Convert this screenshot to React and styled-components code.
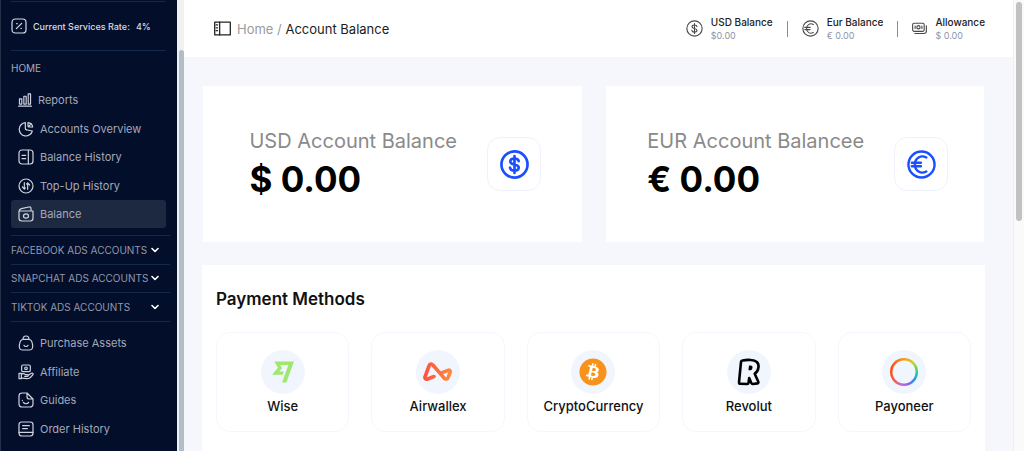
import React from "react";
import styled, { createGlobalStyle } from "styled-components";
import { FaBitcoin } from "react-icons/fa";

const Icon = ({ size = 16, box = 24, stroke = 1.8, children }) => (
  <svg
    width={size}
    height={size}
    viewBox={`0 0 ${box} ${box}`}
    fill="none"
    stroke="currentColor"
    strokeWidth={stroke}
    strokeLinecap="round"
    strokeLinejoin="round"
    aria-hidden="true"
  >
    {children}
  </svg>
);

const RateIcon = () => (
  <Icon>
    <rect x="1.5" y="1.5" width="21" height="21" rx="5" />
    <path d="M8 16l8-8M8.5 8.5h.8M14.8 15.5h.8" />
  </Icon>
);

const ReportsIcon = () => (
  <Icon size={14} stroke={2}>
    <path d="M1 22.500h22M2.500 19V10h4v9zM10 19V5.500h4V19zM17.500 19V1.500h4V19z" />
  </Icon>
);

const PieIcon = () => (
  <Icon>
    <path d="M11 2.500a10 10 0 1 0 10.500 12.500l-7.500-1.500c-2 0-3-1-3-3z" />
    <path d="M15 2.500v5c0 1 .5 1.500 1.500 1.500h5.500M15 2.500c3.500.5 6.500 3 7 6.500M16.500 7.500l3.500-3.500" />
  </Icon>
);

const LedgerIcon = () => (
  <Icon>
    <rect x="1.500" y="1.500" width="21" height="21" rx="4.500" />
    <path d="M15.500 2v20M6 9.500h5.500M6 14.500h5.500" />
  </Icon>
);

const TopUpIcon = () => (
  <Icon>
    <circle cx="12" cy="12" r="10.500" />
    <path d="M9.500 7v9.500l-3-3M14.500 17V7.500l3 3M9.500 16.500l1.500-1.500M14.500 7.500L13 9" />
  </Icon>
);

const WalletIcon = () => (
  <Icon>
    <path d="M1.500 7.500v11a4 4 0 0 0 4 4h13a4 4 0 0 0 4-4v-11zM1.500 7.500C2 5 3 4.500 5 4l11.500-2.500c2-.4 3 .5 3 2.500v3.500" />
    <ellipse cx="12" cy="15" rx="3.800" ry="3.200" />
  </Icon>
);

const BagIcon = () => (
  <Icon>
    <path d="M7.500 6.500C7.500 3.500 9 1.500 12 1.500s4.500 2 4.500 5M8 6.500h8c4 0 5.500 4 6 9 .4 4.500-1 7-4.500 7h-11c-3.500 0-5-2.500-4.500-7 .5-5 2-9 6-9z" />
    <path d="M9 15.500c1.500 2.300 4.500 2.300 6 0" />
  </Icon>
);

const AffiliateIcon = () => (
  <Icon>
    <rect x="5.500" y="1.500" width="13" height="10" rx="2" />
    <circle cx="12" cy="6.500" r="2" />
    <path d="M1.500 14h3.500v8H1.500zM5 15.500c2-1.500 4-1.500 6 .5h3c2 0 2 2.500 0 2.500H10M15.500 17l4.500-3c2-1 3.500.8 2 2.500-4 4.500-5 5.500-9 5.500-3 0-5-.5-8-1" />
  </Icon>
);

const GuideIcon = () => (
  <Icon>
    <path d="M13.500 1.500H6.500c-3.500 0-5 1.500-5 5v11c0 3.500 1.500 5 5 5h11c3.500 0 5-1.500 5-5v-7zM13.500 1.500V7c0 2.500 1 3.500 3.500 3.500h5.500" />
    <path d="M8 15.500c2 2.800 6 2.800 8 0M6.500 12.500v.3" />
  </Icon>
);

const OrderIcon = () => (
  <Icon>
    <rect x="1.500" y="1.500" width="21" height="21" rx="4" />
    <path d="M1.500 17h21M7 7h10M7 11.500h7" />
  </Icon>
);

const PanelIcon = () => (
  <Icon size={17} stroke={1.8}>
    <rect x="1" y="3" width="22" height="18" />
    <path d="M8 3v18M3 7h2M3 11h2M3 15h2" />
  </Icon>
);

const DollarIcon = ({ size, stroke }) => (
  <Icon size={size} stroke={stroke}>
    <circle cx="12" cy="12" r="10.800" />
    <path d="M15.500 9.300C15.300 7.800 14 7 12 7c-2.200 0-3.500 1-3.500 2.500 0 3.500 7 1.500 7 5 0 1.600-1.400 2.600-3.500 2.600s-3.500-1-3.700-2.500M12 5v14" />
  </Icon>
);

const EuroIcon = ({ size, stroke }) => (
  <Icon size={size} stroke={stroke}>
    <circle cx="12" cy="12" r="10.800" />
    <path d="M16 6.200c-4.500-2.500-9.500.5-9.500 5.800s5 8.300 9.500 5.800M4 10.500h7.500M4 13.500h7.500" />
  </Icon>
);

const CashIcon = () => (
  <Icon size={15} stroke={1.8}>
    <rect x="1" y="3.500" width="18.500" height="13" rx="2.500" />
    <circle cx="10.300" cy="10" r="2.600" />
    <path d="M5 8v4M15.800 8v4M4.500 20H19c2.500 0 4-1.500 4-4V7.500" />
  </Icon>
);

const WiseLogo = () => (
  <svg width="22" height="22" viewBox="0 0 24 24" fill="#9fe870" aria-hidden="true">
    <path d="M6.488 7.469 0 15.050h11.585l1.301-3.576H7.922l3.033-3.507.01-.092L8.993 4.480h8.873l-6.878 18.925h4.706L24 .595H2.543z" />
  </svg>
);

const AirwallexLogo = () => (
  <svg width="30" height="20" viewBox="0 0 30 20" fill="none" aria-hidden="true">
    <defs>
      <linearGradient id="airwallex" x1="0" y1="0" x2="30" y2="0" gradientUnits="userSpaceOnUse">
        <stop offset="0" stopColor="#ff4f42" />
        <stop offset="1" stopColor="#ff8e3c" />
      </linearGradient>
    </defs>
    <path
      d="M11 14.500L4.500 17c-1.800.6-3-.6-2.500-2.200L6.200 3.500C6.900 1.700 8.700 1.500 9.900 3l11.300 13.200c1.200 1.300 3.300 1 3.900-.6l2-5.100c.6-1.700-.6-2.800-2.100-2.200l-7.200 2.900"
      stroke="url(#airwallex)"
      strokeWidth="3.600"
      strokeLinecap="round"
      strokeLinejoin="round"
    />
  </svg>
);

const RevolutLogo = () => (
  <svg width="24" height="28" viewBox="0 0 24 28" aria-hidden="true">
    <path
      d="M5.500 2.500C8 2 11 1.800 14 2c5 .2 8 2.700 7.500 7.200-.3 3.300-1.600 5.300-3.800 6.500l3.600 8c.3.900-.1 1.500-.9 1.700l-4.500.6c-.8.1-1.300-.3-1.600-1L12.200 20l-.7 4.800c-.1.800-.6 1.200-1.400 1.200l-6.900-.2c-.9 0-1.300-.6-1.200-1.400L4 4c.1-1 .6-1.400 1.500-1.500z"
      fill="#f1f5fe"
      stroke="#000"
      strokeWidth="2.600"
      strokeLinejoin="round"
    />
    <path d="M12 7.500h1.500c1.500 0 2.200.8 2 2.200-.2 1.700-1.200 2.600-2.700 2.600h-1.400z" fill="#000" />
  </svg>
);

const accountLinks = [
  { label: "Reports", icon: <ReportsIcon /> },
  { label: "Accounts Overview", icon: <PieIcon /> },
  { label: "Balance History", icon: <LedgerIcon /> },
  { label: "Top-Up History", icon: <TopUpIcon /> },
  { label: "Balance", icon: <WalletIcon />, active: true },
];

const adGroups = ["FACEBOOK ADS ACCOUNTS", "SNAPCHAT ADS ACCOUNTS", "TIKTOK ADS ACCOUNTS"];

const otherLinks = [
  { label: "Purchase Assets", icon: <BagIcon /> },
  { label: "Affiliate", icon: <AffiliateIcon /> },
  { label: "Guides", icon: <GuideIcon /> },
  { label: "Order History", icon: <OrderIcon /> },
];

const summary = [
  { label: "USD Balance", value: "$0.00", icon: <DollarIcon size={17} stroke={1.6} /> },
  { label: "Eur Balance", value: "€ 0.00", icon: <EuroIcon size={17} stroke={1.6} /> },
  { label: "Allowance", value: "$ 0.00", icon: <CashIcon /> },
];

const balances = [
  { label: "USD Account Balance", value: "$ 0.00", icon: <DollarIcon size={29} stroke={2.2} /> },
  { label: "EUR Account Balancee", value: "€ 0.00", icon: <EuroIcon size={29} stroke={2} /> },
];

const NavLinks = ({ links, height }) => (
  <NavList $height={height}>
    {links.map(({ label, icon, active }) => (
      <li key={label}>
        <NavLink href="#" $active={active} aria-current={active ? "page" : undefined}>
          {icon}
          {label}
        </NavLink>
      </li>
    ))}
  </NavList>
);

const App = () => {
  const methods = [
    { label: "Wise", logo: <WiseLogo /> },
    { label: "Airwallex", logo: <AirwallexLogo /> },
    {
      label: "CryptoCurrency",
      logo: (
        <Coin>
          <FaBitcoin size={28} />
        </Coin>
      ),
    },
    { label: "Revolut", logo: <RevolutLogo /> },
    { label: "Payoneer", logo: <Ring /> },
  ];

  return (
    <>
      <GlobalStyle />
      <Page>
        <Sidebar>
          <Rate>
            <RateIcon />
            <span>Current Services Rate:</span>
            <span>4%</span>
          </Rate>
          <NavTitle>HOME</NavTitle>
          <NavLinks links={accountLinks} height={142} />
          <Groups>
            {adGroups.map((name) => (
              <GroupButton key={name} type="button">
                {name}
                <Icon size={8} box={8} stroke={1.6}>
                  <path d="M1 2.500l3 3 3-3" />
                </Icon>
              </GroupButton>
            ))}
          </Groups>
          <NavLinks links={otherLinks} height={114} />
        </Sidebar>
        <SideTrack>
          <SideThumb />
        </SideTrack>
        <Content>
          <Header>
            <Crumbs aria-label="Breadcrumb">
              <MenuButton type="button" aria-label="Toggle menu">
                <PanelIcon />
              </MenuButton>
              <span>
                <a href="#">Home</a> / <strong>Account Balance</strong>
              </span>
            </Crumbs>
            <Summary>
              {summary.map(({ label, value, icon }) => (
                <SummaryItem key={label}>
                  {icon}
                  <div>
                    <SummaryLabel>{label}</SummaryLabel>
                    <SummaryValue>{value}</SummaryValue>
                  </div>
                </SummaryItem>
              ))}
            </Summary>
          </Header>
          <Main>
            <BalanceGrid>
              {balances.map(({ label, value, icon }) => (
                <BalanceCard key={label}>
                  <div>
                    <BalanceLabel>{label}</BalanceLabel>
                    <BalanceValue>{value}</BalanceValue>
                  </div>
                  <IconBox>{icon}</IconBox>
                </BalanceCard>
              ))}
            </BalanceGrid>
            <Panel>
              <PanelTitle>Payment Methods</PanelTitle>
              <MethodGrid>
                {methods.map(({ label, logo }) => (
                  <Method key={label} type="button">
                    <LogoCircle>{logo}</LogoCircle>
                    {label}
                  </Method>
                ))}
              </MethodGrid>
            </Panel>
          </Main>
        </Content>
        <PageTrack>
          <PageThumb />
        </PageTrack>
      </Page>
    </>
  );
};

const GlobalStyle = createGlobalStyle`
  * {
    box-sizing: border-box;
  }
  body {
    margin: 0;
    font-family: Inter, "Liberation Sans", sans-serif;
    background: #f6f7fd;
  }
  button {
    font-family: inherit;
    cursor: pointer;
  }
  svg {
    flex-shrink: 0;
    display: block;
  }
`;
const Page = styled.div`
  display: flex;
  height: 100vh;
  overflow: hidden;
`;
const Sidebar = styled.aside`
  flex: 0 0 177px;
  padding: 1px 11px 0 10px;
  overflow: hidden;
  background: #030e2b;
  border-left: 1px solid #263149;
  color: #a3a9b8;
`;
const Rate = styled.div`
  display: flex;
  align-items: center;
  gap: 6px;
  height: 50px;
  border: solid #14284a;
  border-width: 1px 0;
  font-size: 9px;
  font-weight: 500;
  color: #d7dbe4;
`;
const NavTitle = styled.h2`
  margin: 10px 0;
  font-size: 10px;
  font-weight: 400;
  line-height: 15px;
`;
const NavList = styled.ul`
  display: grid;
  align-content: space-between;
  min-height: ${({ $height }) => $height}px;
  margin: 0;
  padding: 0;
  list-style: none;
`;
const NavLink = styled.a`
  display: flex;
  align-items: center;
  gap: 6px;
  height: 28px;
  padding-left: 7px;
  border-radius: 3px;
  font-size: 11px;
  color: inherit;
  text-decoration: none;
  background: ${({ $active }) => ($active ? "#1d2841" : "transparent")};
  svg {
    color: #cfd4df;
  }
`;
const Groups = styled.div`
  display: grid;
  grid-auto-rows: 1fr;
  min-height: 87px;
  margin: 7px -4px 7px 0;
  border-top: 1px solid #14284a;
`;
const GroupButton = styled.button`
  display: flex;
  align-items: center;
  justify-content: space-between;
  padding: 0 11px 0 0;
  border: 0;
  border-bottom: 1px solid #14284a;
  background: none;
  font-size: 10px;
  color: #9299aa;
  white-space: nowrap;
  svg {
    color: #fff;
  }
`;
const SideTrack = styled.div`
  flex: 0 0 7px;
  display: flex;
  padding: 50px 0 0 2px;
  background: #f1f1f1;
`;
const SideThumb = styled.div`
  flex: 1;
  border-radius: 3px 3px 0 0;
  background: #b0bec5;
`;
const Content = styled.div`
  flex: 1;
  min-width: 0;
`;
const Header = styled.header`
  display: flex;
  align-items: center;
  justify-content: space-between;
  height: 57px;
  padding: 0 28px 0 30px;
  background: #fff;
`;
const Crumbs = styled.nav`
  display: flex;
  align-items: center;
  gap: 6px;
  font-size: 13px;
  color: #9b9b9b;
  a {
    color: inherit;
    text-decoration: none;
  }
  strong {
    font-weight: 400;
    color: #1c1c1c;
  }
`;
const MenuButton = styled.button`
  padding: 0;
  border: 0;
  background: none;
  color: #222;
`;
const Summary = styled.div`
  display: flex;
  align-items: center;
`;
const SummaryItem = styled.div`
  display: flex;
  align-items: center;
  gap: 8px;
  color: #4a4a4a;
  & + &::before {
    content: "";
    width: 1px;
    height: 16px;
    margin: 0 6px 0 14px;
    background: #8c8c8c;
  }
`;
const SummaryLabel = styled.div`
  font-size: 10px;
  font-weight: 500;
  line-height: 13px;
  color: #222;
`;
const SummaryValue = styled.div`
  font-size: 9px;
  line-height: 13px;
  color: #8d95ab;
`;
const Main = styled.main`
  padding: 28px 28px 0 18px;
`;
const BalanceGrid = styled.div`
  display: grid;
  grid-template-columns: 1fr 1fr;
  gap: 22px;
`;
const BalanceCard = styled.section`
  display: flex;
  align-items: center;
  justify-content: center;
  gap: 30px;
  min-height: 158px;
  padding-left: 6px;
  border: 1px solid #f4f7fe;
  background: #fff;
`;
const BalanceLabel = styled.h2`
  margin: 0;
  font-size: 20px;
  font-weight: 400;
  line-height: 30px;
  color: #8a8a8a;
  white-space: nowrap;
`;
const BalanceValue = styled.p`
  margin: 0;
  font-size: 35px;
  font-weight: 700;
  line-height: 46px;
  color: #000;
`;
const IconBox = styled.div`
  display: grid;
  place-items: center;
  width: 54px;
  height: 54px;
  border: 1px solid #f0f2fb;
  border-radius: 13px;
  color: #1a4fff;
`;
const Panel = styled.section`
  margin-top: 22px;
  padding: 20px 14px;
  background: #fff;
`;
const PanelTitle = styled.h2`
  margin: 0 0 19px;
  font-size: 17px;
  font-weight: 600;
  line-height: 28px;
  color: #111;
`;
const MethodGrid = styled.div`
  display: grid;
  grid-template-columns: repeat(5, 1fr);
  gap: 22px;
`;
const Method = styled.button`
  display: flex;
  flex-direction: column;
  align-items: center;
  gap: 3px;
  min-height: 100px;
  padding: 17px 0 16px;
  border: 1px solid #f5f7fe;
  border-radius: 14px;
  background: none;
  font-size: 13px;
  font-weight: 500;
  line-height: 18px;
  color: #111;
`;
const LogoCircle = styled.span`
  display: grid;
  place-items: center;
  width: 44px;
  height: 44px;
  border-radius: 50%;
  background: #f1f5fe;
`;
const Coin = styled.span`
  border-radius: 50%;
  background: radial-gradient(#fff 60%, transparent 61%);
  color: #f7931a;
`;
const Ring = styled.span`
  width: 28px;
  height: 28px;
  border-radius: 50%;
  background:
    radial-gradient(#f1f5fe 0 11px, transparent 12px),
    conic-gradient(#f79a1c, #c8d62b 45deg, #2fd673 85deg, #1f9be0 125deg, #7a6cf0 155deg, #c565d6 190deg, #ff5a4a 230deg, #ff4a12 290deg, #f79a1c);
`;
const PageTrack = styled.div`
  flex: 0 0 11px;
  padding: 2px 2px 0;
  border-left: 1px solid #f0f0f3;
  background: #fafafa;
`;
const PageThumb = styled.div`
  width: 6px;
  height: 219px;
  border-radius: 3px;
  background: #c1c1c1;
`;

export default App;
